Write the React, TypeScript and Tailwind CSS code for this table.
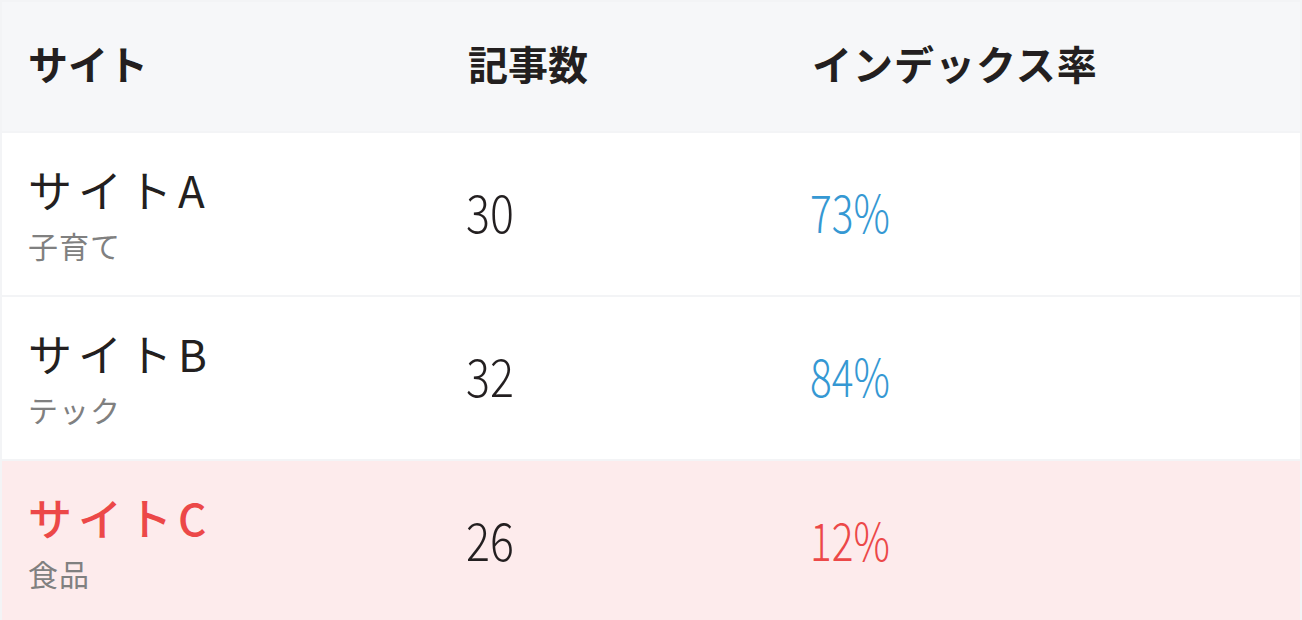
const rows = [
  { name: "サイトA", sub: "子育て", count: "30", rate: "73%", bad: false },
  { name: "サイトB", sub: "テック", count: "32", rate: "84%", bad: false },
  { name: "サイトC", sub: "食品", count: "26", rate: "12%", bad: true },
];

const jp = "font-['Noto_Sans_CJK_JP','Noto_Sans',sans-serif]";

export default function App() {
  return (
    <div className={`w-[1302px] h-[620px] overflow-hidden bg-white ${jp}`}>
      <div className="border-2 border-[#f3f4f6]">
        <div className="grid grid-cols-[440px_344px_1fr] items-center h-[129px] pb-[8px] bg-[#f6f7f9] text-[40px] font-bold text-[#231f20]">
          <div className="pl-[26px]">サイト</div>
          <div className="pl-[26px]">記事数</div>
          <div className="pl-[26px] tracking-[1px]">インデックス率</div>
        </div>
        {rows.map((r) => (
          <div
            key={r.name}
            className={`grid grid-cols-[440px_344px_1fr] items-center h-[164px] border-t-2 border-[#f3f4f6] ${
              r.bad ? "bg-[#fdebec]" : "bg-white"
            }`}
          >
            <div className="pl-[26px] flex flex-col">
              <span
                className={`text-[44px] leading-[52px] tracking-[6px] ${
                  r.bad ? "text-[#ec4848] font-medium" : "text-[#231f20]"
                }`}
              >
                {r.name}
              </span>
              <span className="mt-[10px] text-[30px] leading-[40px] tracking-[1px] text-[#808080]">{r.sub}</span>
            </div>
            <div className="pl-[24px] pb-[6px]">
              <span className="inline-block origin-left scale-x-[0.86] text-[52px] font-light text-[#231f20]">
                {r.count}
              </span>
            </div>
            <div className="pl-[24px] pb-[6px]">
              <span
                className={`inline-block origin-left scale-x-[0.78] text-[52px] font-light ${
                  r.bad ? "text-[#ec4848]" : "text-[#3598d3]"
                }`}
              >
                {r.rate}
              </span>
            </div>
          </div>
        ))}
      </div>
    </div>
  );
}
